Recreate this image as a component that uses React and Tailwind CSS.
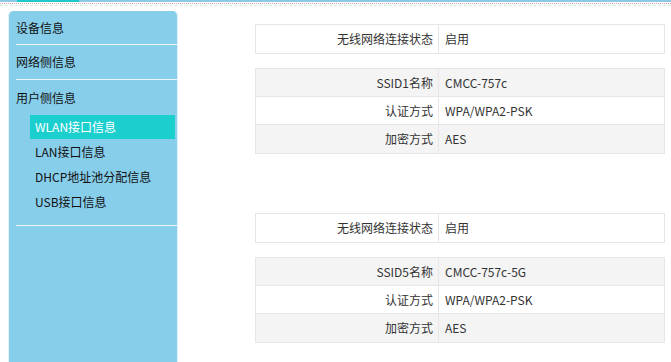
import React from "react";

const font = { fontFamily: '"Noto Sans CJK SC", "Noto Sans", sans-serif' };

function Table({ rows }) {
  return (
    <div className="border border-[#e6e6e6]">
      {rows.map((r, i) => (
        <div
          key={i}
          className={`flex h-[28px] text-[12px] text-[#333] ${i < rows.length - 1 ? "border-b border-[#e6e6e6]" : ""} ${r.gray ? "bg-[#f4f4f4]" : "bg-white"}`}
        >
          <div className="w-[183px] shrink-0 border-r border-[#e6e6e6] flex items-center justify-end pr-[5px]">{r.k}</div>
          <div className="flex-1 flex items-center pl-[6px]">{r.v}</div>
        </div>
      ))}
    </div>
  );
}

export default function App() {
  return (
    <div className="w-[671px] h-[362px] bg-white overflow-hidden" style={font}>
      <div className="h-[2px] bg-[#8dc8e6] flex">
        <div className="w-[17px]" />
        <div className="w-[62px] bg-[#1ec9c9]" />
      </div>
      <div className="h-[2px] border-b border-dotted border-[#d9a6b6]" />
      <div className="h-[2px] border-b border-dashed border-[#cfeecf]" />
      <div className="flex pt-[5px]">
        <div className="ml-[8px] w-[170px] h-[360px] bg-[#87ceeb] rounded-t-[5px] border-l border-r border-[#e3f2f9]">
          <div className="ml-[7px] h-[34px] flex items-center text-[12px] text-[#111] border-b border-[#eef7fb]">设备信息</div>
          <div className="ml-[7px] h-[35px] flex items-center text-[12px] text-[#111] border-b border-[#eef7fb]">网络侧信息</div>
          <div className="ml-[7px] h-[35px] flex items-center text-[12px] text-[#111]">用户侧信息</div>
          <div className="ml-[21px] mr-[2px] mt-[0px]">
            <div className="h-[24px] bg-[#1ccfcf] text-white text-[12px] flex items-center pl-[5px]">WLAN接口信息</div>
            <div className="h-[25px] text-[#111] text-[12px] flex items-center pl-[5px]">LAN接口信息</div>
            <div className="h-[25px] text-[#111] text-[12px] flex items-center pl-[5px]">DHCP地址池分配信息</div>
            <div className="h-[25px] text-[#111] text-[12px] flex items-center pl-[5px]">USB接口信息</div>
          </div>
          <div className="ml-[7px] mt-[11px] border-b border-[#eef7fb]" />
        </div>
        <div className="ml-[77px] w-[410px] pt-[13px]">
          <Table rows={[{ k: "无线网络连接状态", v: "启用" }]} />
          <div className="h-[14px]" />
          <Table
            rows={[
              { k: "SSID1名称", v: "CMCC-757c", gray: true },
              { k: "认证方式", v: "WPA/WPA2-PSK" },
              { k: "加密方式", v: "AES", gray: true },
            ]}
          />
          <div className="h-[59px]" />
          <Table rows={[{ k: "无线网络连接状态", v: "启用" }]} />
          <div className="h-[14px]" />
          <Table
            rows={[
              { k: "SSID5名称", v: "CMCC-757c-5G", gray: true },
              { k: "认证方式", v: "WPA/WPA2-PSK" },
              { k: "加密方式", v: "AES", gray: true },
            ]}
          />
        </div>
      </div>
    </div>
  );
}
